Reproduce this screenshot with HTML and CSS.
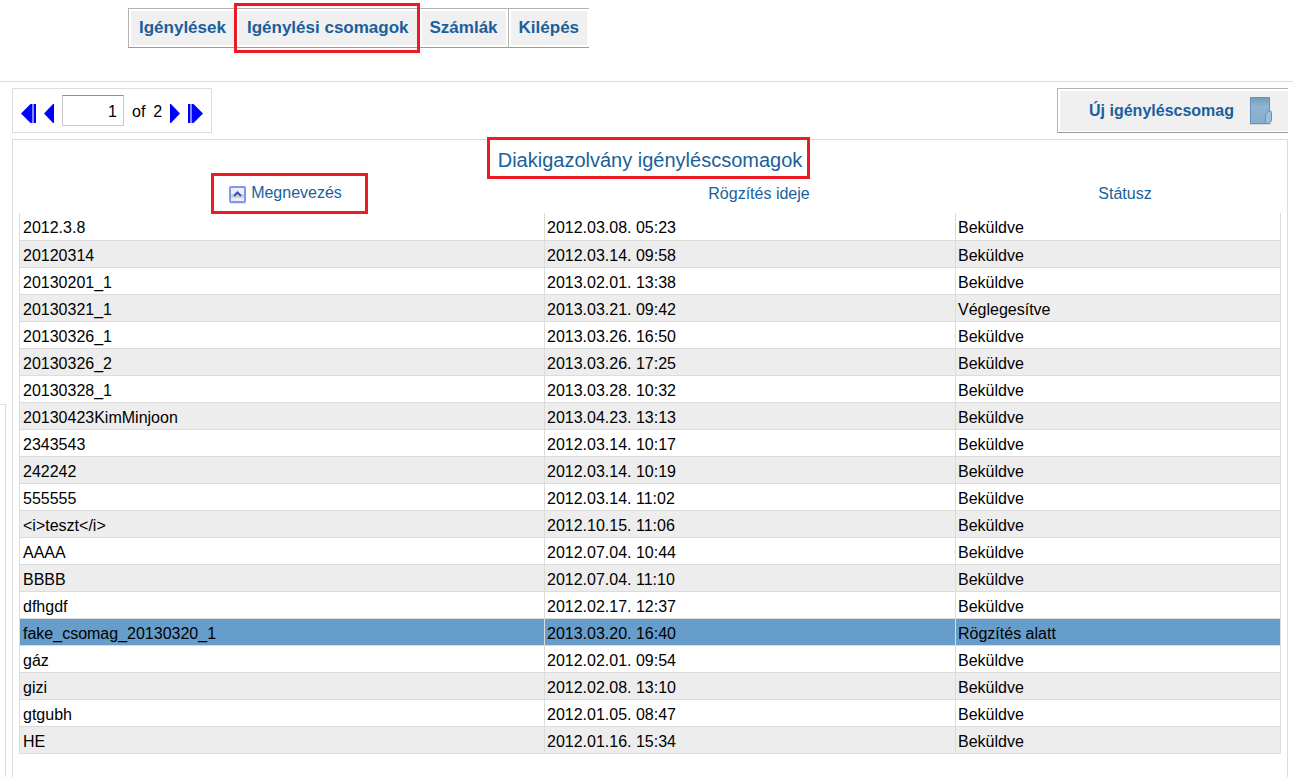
FILE: index.html
```html
<!DOCTYPE html>
<html lang="hu">
<head>
<meta charset="utf-8">
<title>Diakigazolvány igényléscsomagok</title>
<link rel="stylesheet" href="styles.css">
</head>
<body>
<header class="top">
  <nav class="menu">
    <button type="button" class="menu-item">Igénylések</button>
    <button type="button" class="menu-item marked marked-menu">Igénylési csomagok</button>
    <button type="button" class="menu-item">Számlák</button>
    <button type="button" class="menu-item">Kilépés</button>
  </nav>
</header>
<div class="page">
  <aside class="side"></aside>
  <main class="content">
    <div class="toolbar">
      <form class="pager">
        <button type="button" class="arrow" aria-label="Első oldal"><svg width="15" height="19" viewBox="0 0 15 19"><path fill="#00f" d="M0 9.500 9.500 0H11V19H9.500zM13 0h2v19h-2z"/><path fill="#88f" d="M11 0h2v19h-2z"/></svg></button>
        <button type="button" class="arrow" aria-label="Előző oldal"><svg width="10" height="19" viewBox="0 0 10 19"><path fill="#00f" d="M0 9.500 9 0h1v19H9z"/></svg></button>
        <input class="page-no" type="text" value="1" aria-label="Oldal">
        <span class="of">of</span><span class="total">2</span>
        <button type="button" class="arrow" aria-label="Következő oldal"><svg width="10" height="19" viewBox="0 0 10 19"><path fill="#00f" d="M10 9.500 1 0H0v19h1z"/></svg></button>
        <button type="button" class="arrow" aria-label="Utolsó oldal"><svg width="15" height="19" viewBox="0 0 15 19"><path fill="#00f" d="M15 9.500 5.500 0H4V19h1.500zM0 0h2v19H0z"/><path fill="#88f" d="M2 0h2v19H2z"/></svg></button>
      </form>
      <button type="button" class="new-item">Új igényléscsomag
        <svg width="24" height="30" viewBox="0 0 24 30">
          <defs><linearGradient id="folder" x1="0" y1="0" x2="0" y2="1"><stop offset="0" stop-color="#6f9db8"/><stop offset=".35" stop-color="#8fb5d0"/><stop offset="1" stop-color="#86acd0"/></linearGradient></defs>
          <path fill="#d5d9dc" d="M0 27h22v2H0z"/>
          <path fill="url(#folder)" stroke="#6592b3" d="M1.500 1.500h19v26h-19z"/>
          <path fill="#9bbfdc" stroke="#6592b3" d="M16.500 27.500v-9l3-3.500q3-1 3 2v7q0 2-3 3.500z"/>
        </svg>
      </button>
    </div>
    <section class="panel">
      <h1 class="title"><span class="marked marked-title">Diakigazolvány igényléscsomagok</span></h1>
      <table class="grid">
        <colgroup><col class="c-name"><col class="c-time"><col class="c-status"></colgroup>
        <thead>
          <tr>
            <th class="first"><a href="#" class="sort marked marked-sort"><svg width="18" height="18" viewBox="0 0 18 18"><path fill="#e2e2e4" d="M1 16h16v2H1z"/><rect x="1" y="1" width="15" height="15" rx="1" fill="#eceef8" stroke="#7f98ee" stroke-width="2"/><path fill="#cfd1da" d="M2 8h13v4H2z"/><path d="m5 10 3.500-3.500L12 10" fill="none" stroke="#3c4fae" stroke-width="2"/></svg>Megnevezés</a></th>
            <th><a href="#">Rögzítés ideje</a></th>
            <th class="last"><a href="#">Státusz</a></th>
          </tr>
        </thead>
        <tbody>
          <tr><td>2012.3.8</td><td>2012.03.08. 05:23</td><td>Beküldve</td></tr>
          <tr><td>20120314</td><td>2012.03.14. 09:58</td><td>Beküldve</td></tr>
          <tr><td>20130201_1</td><td>2013.02.01. 13:38</td><td>Beküldve</td></tr>
          <tr><td>20130321_1</td><td>2013.03.21. 09:42</td><td>Véglegesítve</td></tr>
          <tr><td>20130326_1</td><td>2013.03.26. 16:50</td><td>Beküldve</td></tr>
          <tr><td>20130326_2</td><td>2013.03.26. 17:25</td><td>Beküldve</td></tr>
          <tr><td>20130328_1</td><td>2013.03.28. 10:32</td><td>Beküldve</td></tr>
          <tr><td>20130423KimMinjoon</td><td>2013.04.23. 13:13</td><td>Beküldve</td></tr>
          <tr><td>2343543</td><td>2012.03.14. 10:17</td><td>Beküldve</td></tr>
          <tr><td>242242</td><td>2012.03.14. 10:19</td><td>Beküldve</td></tr>
          <tr><td>555555</td><td>2012.03.14. 11:02</td><td>Beküldve</td></tr>
          <tr><td>&lt;i&gt;teszt&lt;/i&gt;</td><td>2012.10.15. 11:06</td><td>Beküldve</td></tr>
          <tr><td>AAAA</td><td>2012.07.04. 10:44</td><td>Beküldve</td></tr>
          <tr><td>BBBB</td><td>2012.07.04. 11:10</td><td>Beküldve</td></tr>
          <tr><td>dfhgdf</td><td>2012.02.17. 12:37</td><td>Beküldve</td></tr>
          <tr class="selected"><td>fake_csomag_20130320_1</td><td>2013.03.20. 16:40</td><td>Rögzítés alatt</td></tr>
          <tr><td>gáz</td><td>2012.02.01. 09:54</td><td>Beküldve</td></tr>
          <tr><td>gizi</td><td>2012.02.08. 13:10</td><td>Beküldve</td></tr>
          <tr><td>gtgubh</td><td>2012.01.05. 08:47</td><td>Beküldve</td></tr>
          <tr><td>HE</td><td>2012.01.16. 15:34</td><td>Beküldve</td></tr>
        </tbody>
      </table>
    </section>
  </main>
</div>
</body>
</html>
```
FILE: styles.css
```css
* { box-sizing: border-box; }
body {
  margin: 0;
  min-height: 100vh;
  display: flex;
  flex-direction: column;
  background: #fff;
  color: #000;
  font: 16px/20px "Liberation Sans", Arial, sans-serif;
}
button, input { font: inherit; }
a { color: #1a5f9c; text-decoration: none; }

.top {
  padding: 8px 0 33px 128px;
  border-bottom: 1px solid #dcdcdc;
}
.menu { display: flex; }
.menu-item {
  height: 40px;
  padding: 0 10px;
  border: 1px solid #b4b4b4;
  border-right: 0;
  border-bottom-color: #999;
  background: #f0f0f0;
  box-shadow: inset 0 0 0 2px #fff;
  color: #1a5f9c;
  font-size: 17px;
  font-weight: bold;
  white-space: nowrap;
}

/* Red highlight frames lie over the content */
.marked { position: relative; }
.marked::after {
  content: "";
  position: absolute;
  z-index: 1;
  border: 3px solid #ed1c24;
  pointer-events: none;
}
.marked-menu::after { inset: -6px -1px -6px -3px; }
.marked-title::after { inset: -12px -8px -8px -11px; }
.marked-sort::after { inset: -10px -26px -10px -18px; }

.page { display: flex; flex: 1; }
.side {
  flex: none;
  width: 6px;
  margin-top: 322px;
  border: solid #dcdcdc;
  border-width: 1px 1px 0 0;
}
.content {
  flex: 1;
  display: flex;
  flex-direction: column;
  padding: 6px 5px 0 6px;
}
.toolbar {
  display: flex;
  justify-content: space-between;
  margin-bottom: 6px;
}
.pager {
  display: flex;
  align-items: center;
  height: 45px;
  padding: 0 8px;
  border: 1px solid #dcdcdc;
}
.arrow {
  display: flex;
  padding: 6px 0 0;
  border: 0;
  background: none;
}
.arrow + .arrow { margin-left: 8px; }
.page-no {
  width: 62px;
  height: 31px;
  margin: 0 8px;
  padding: 2px 6px 0;
  border: 1px solid #c8c8c8;
  border-top-color: #909090;
  text-align: right;
}
.of, .total { padding-top: 2px; }
.total { margin: 0 8px; }
.new-item {
  display: flex;
  align-items: center;
  gap: 15px;
  height: 45px;
  padding: 0 15px 0 31px;
  border: 1px solid #b4b4b4;
  border-right: 0;
  border-bottom-color: #999;
  background: #f0f0f0;
  box-shadow: inset 2px 2px 0 #fff, inset 0 -1px 0 #fff;
  color: #1a5f9c;
  font-weight: bold;
}

.panel {
  flex: 1;
  padding: 0 6px 23px;
  border: 1px solid #dcdcdc;
  border-bottom: 0;
}
.title {
  margin: 0;
  padding: 8px 0 4px;
  color: #1a5f9c;
  font-size: 20px;
  font-weight: normal;
  line-height: 24px;
  text-align: center;
}
.grid {
  width: 100%;
  border-collapse: collapse;
  table-layout: fixed;
}
.c-name { width: 525px; }
.c-time { width: 411px; }
.grid th {
  height: 37px;
  padding: 0 0 2px 18px;
  font-weight: normal;
  vertical-align: middle;
}
.grid th.first { padding-left: 7px; }
.grid th.last { padding-left: 14px; }
.sort {
  display: inline-flex;
  gap: 4px;
  vertical-align: top;
}
.sort svg { margin-top: 3px; }
.grid td {
  height: 27px;
  padding: 5px 2px 1px;
  border: 1px solid #dcdcdc;
}
.grid td:first-child { padding-left: 3px; }
.grid tbody tr:first-child td { border-top: 0; }
.grid tbody tr:nth-child(even) { background: #ededed; }
.grid tbody tr.selected { background: #669dcb; }
```
